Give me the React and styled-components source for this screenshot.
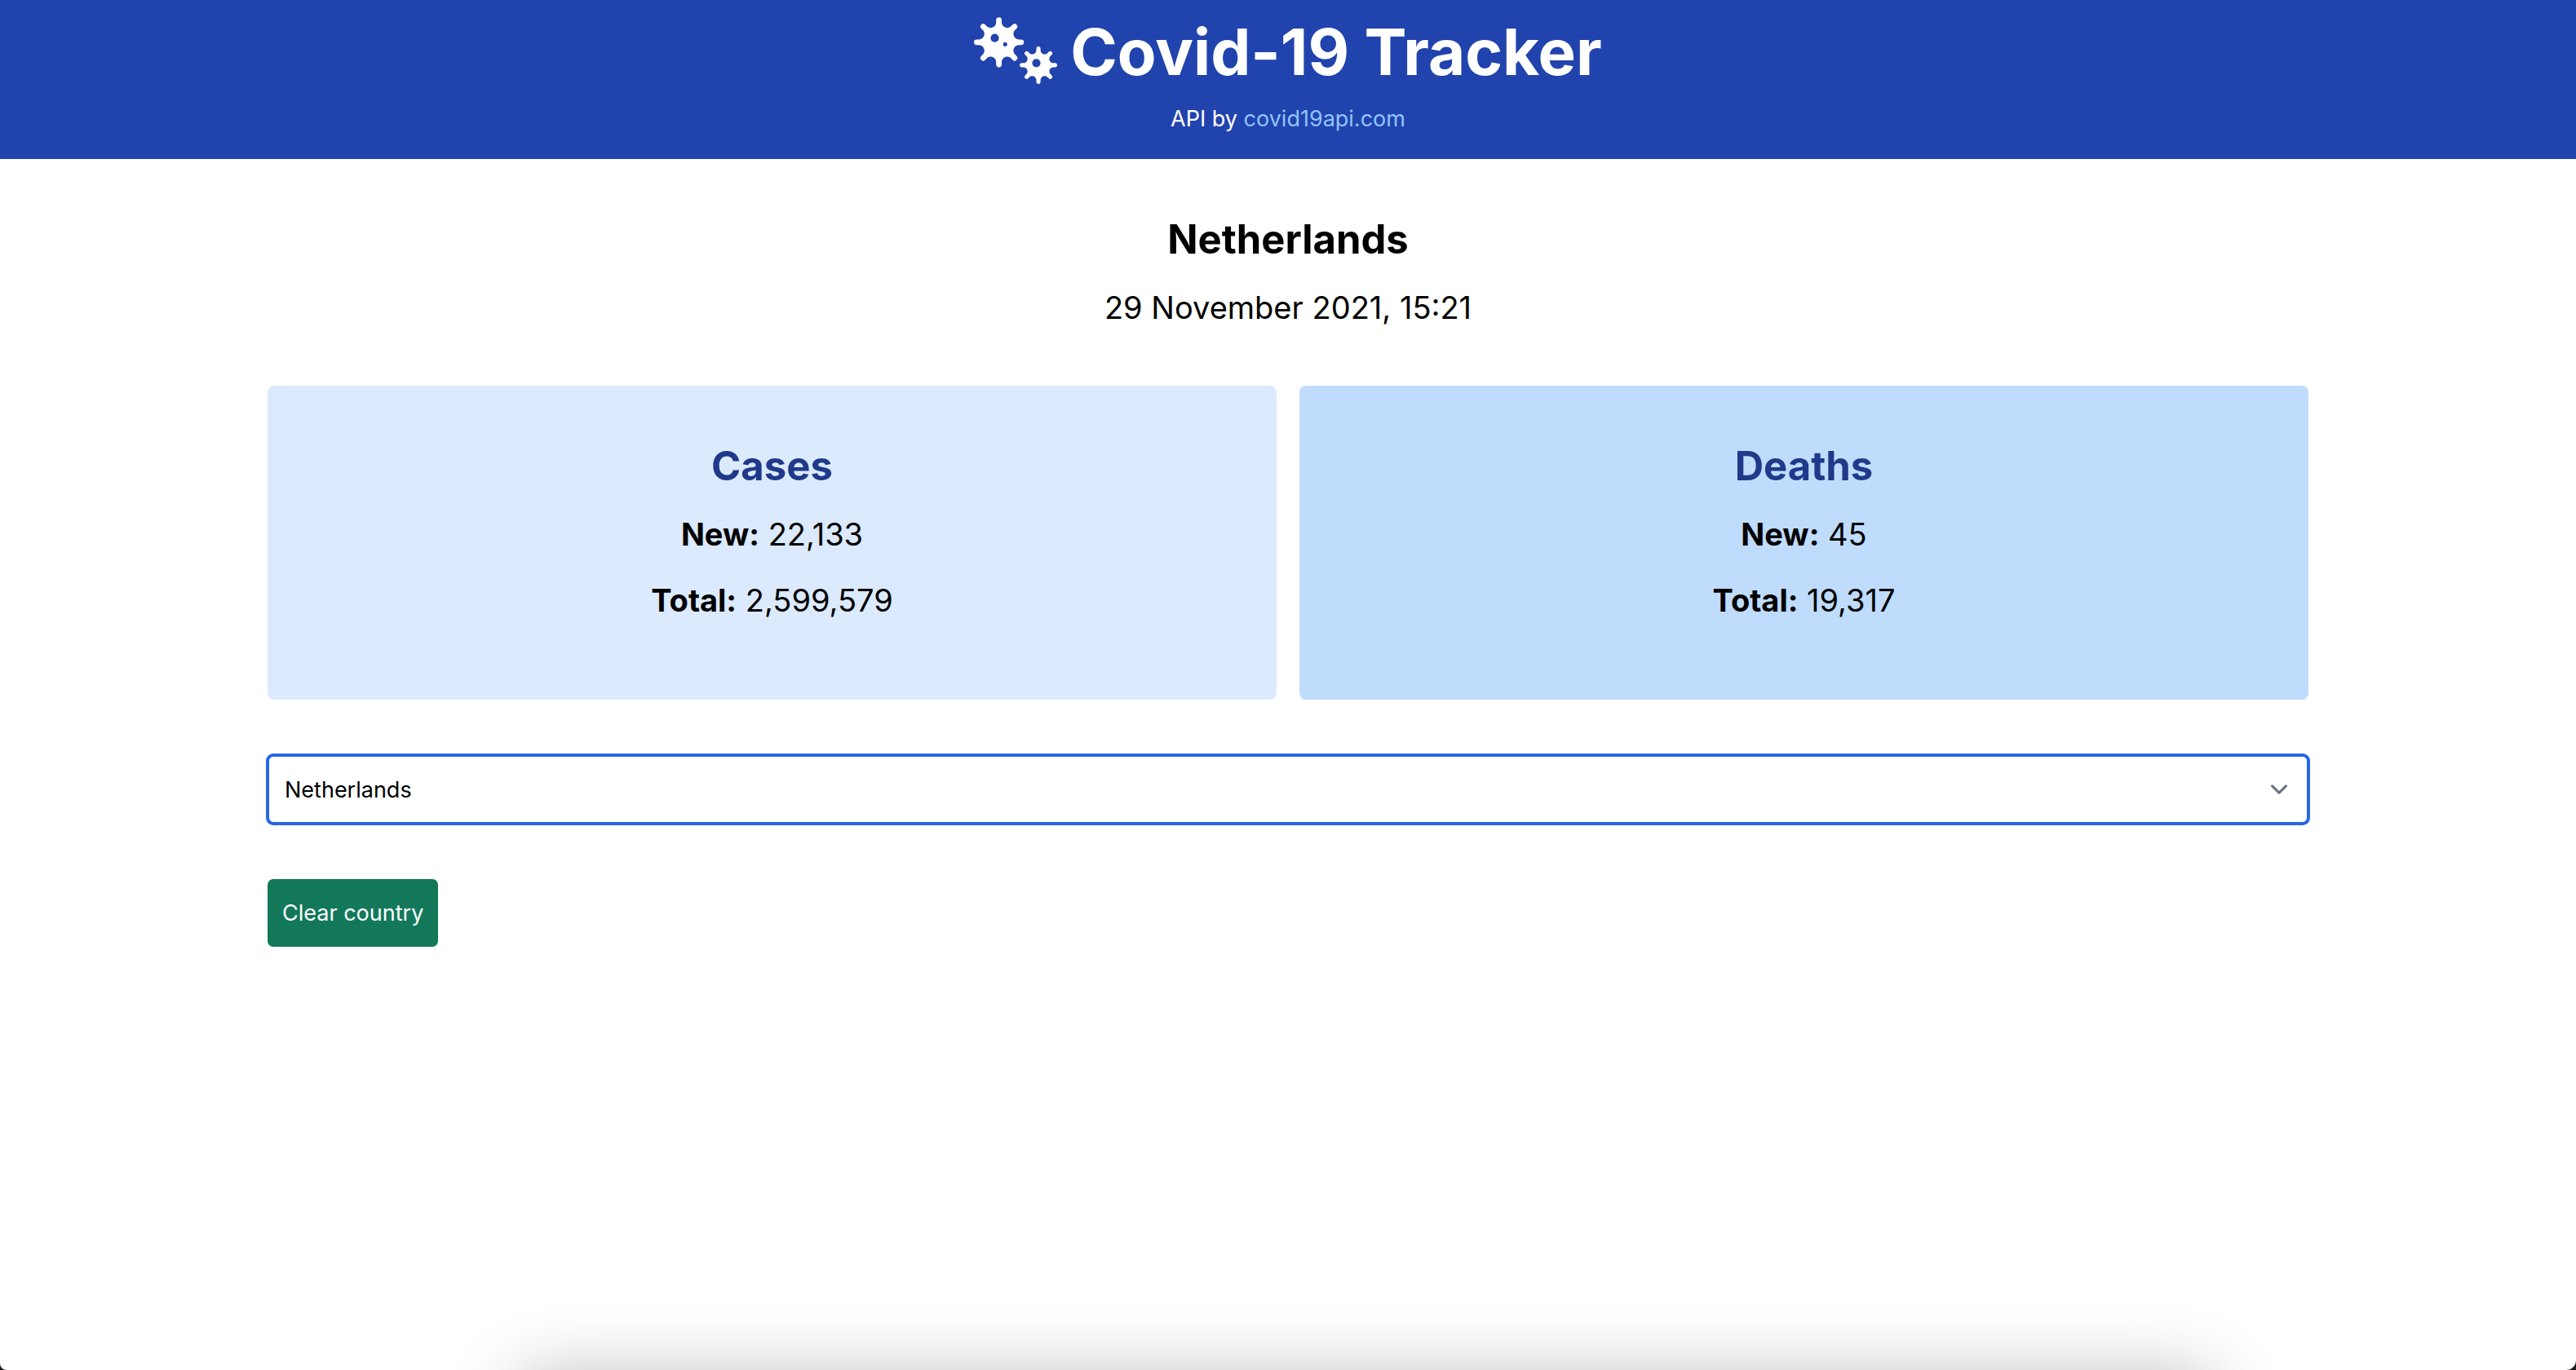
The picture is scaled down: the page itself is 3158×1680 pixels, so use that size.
import { useState } from "react";
import styled, { createGlobalStyle } from "styled-components";
import { FaViruses } from "react-icons/fa";

const GlobalStyle = createGlobalStyle`
  *, *::before, *::after { box-sizing: border-box; }
  body {
    margin: 0;
    background: #1c1c1c;
    color: #000;
    font-family: Inter, "Liberation Sans", sans-serif;
    font-size: 27px;
  }
  h1, h2, h3, p { margin: 0; }
`;

const Page = styled.div`
  position: relative;
  min-height: 100vh;
  overflow: hidden;
  background: #fff;
  border-radius: 0 0 12px 8px;
`;

const Header = styled.header`
  display: flex;
  flex-direction: column;
  align-items: center;
  gap: 12px;
  padding: 16px 28px 27px;
  background: #2143ad;
  color: #fff;
  text-align: center;
`;

const Title = styled.h1`
  display: flex;
  align-items: center;
  gap: 16px;
  font-size: 78px;
  font-weight: 700;
  line-height: 96px;
`;

const VirusIcon = styled(FaViruses)`
  flex: none;
  width: 102px;
  height: 82px;
  margin-bottom: 4px;
`;

const Credit = styled.p`
  line-height: 44px;
`;

const CreditLink = styled.a`
  color: #90c5fd;
  text-decoration: none;
`;

const Main = styled.main`
  display: flex;
  flex-direction: column;
  align-items: stretch;
  gap: 68px;
  max-width: 2558px;
  margin: 0 auto;
  padding: 69px 28px;
`;

const TextStack = styled.div`
  display: flex;
  flex-direction: column;
  gap: 25px;
  text-align: center;
`;

const Heading = styled.h2`
  color: ${(p) => p.$color || "inherit"};
  font-size: 49px;
  font-weight: 700;
  line-height: 60px;
`;

const Line = styled.p`
  font-size: 38px;
  line-height: 56px;
`;

const Cards = styled.section`
  display: grid;
  grid-template-columns: 1fr 1fr;
  gap: 28px;
`;

const Card = styled(TextStack)`
  padding: 69px 28px 94px;
  border-radius: 8px;
  background: ${(p) => p.$background};
`;

const SelectWrap = styled.div`
  display: grid;
  align-items: center;
  > * { grid-area: 1 / 1; }
`;

const CountrySelect = styled.select`
  appearance: none;
  width: 100%;
  height: 84px;
  padding: 0 70px 0 19px;
  border: 2px solid #2766ea;
  border-radius: 7px;
  outline: none;
  box-shadow: 0 0 0 2px #2766ea;
  background: #fff;
  color: #000;
  font: inherit;
`;

const Chevron = styled.svg`
  justify-self: end;
  width: 42px;
  height: 42px;
  margin-right: 15px;
  pointer-events: none;
`;

const ClearButton = styled.button`
  align-self: flex-start;
  padding: 20px 18px;
  border: 0;
  border-radius: 7px;
  background: #13785a;
  color: #fff;
  font: inherit;
  line-height: 43px;
  cursor: pointer;
`;

const DockShadow = styled.div`
  position: absolute;
  top: 100%;
  left: 20%;
  right: 14%;
  height: 160px;
  border-radius: 40px;
  box-shadow: 0 8px 88px rgba(0, 0, 0, 0.28);
  pointer-events: none;
`;

function Statistic({ title, background, fresh, total }) {
  return (
    <Card $background={background}>
      <Heading as="h3" $color="#1f3a8a">{title}</Heading>
      <Line><strong>New:</strong> {fresh}</Line>
      <Line><strong>Total:</strong> {total}</Line>
    </Card>
  );
}

export default function App() {
  const [country, setCountry] = useState("Netherlands");
  return (
    <>
      <GlobalStyle />
      <Page>
        <Header>
          <Title><VirusIcon aria-hidden="true" />Covid-19 Tracker</Title>
          <Credit>API by <CreditLink href="https://covid19api.com">covid19api.com</CreditLink></Credit>
        </Header>
        <Main>
          <TextStack>
            <Heading>Netherlands</Heading>
            <Line>29 November 2021, 15:21</Line>
          </TextStack>
          <Cards>
            <Statistic title="Cases" background="#dbeafe" fresh="22,133" total="2,599,579" />
            <Statistic title="Deaths" background="#bfdcfd" fresh="45" total="19,317" />
          </Cards>
          <SelectWrap>
            <CountrySelect aria-label="Country" value={country} onChange={(e) => setCountry(e.target.value)}>
              <option>Netherlands</option>
            </CountrySelect>
            <Chevron viewBox="0 0 20 20" fill="none" aria-hidden="true">
              <path d="M6 8l4 4 4-4" stroke="#6b7280" strokeWidth="1.5" strokeLinecap="round" strokeLinejoin="round" />
            </Chevron>
          </SelectWrap>
          <ClearButton type="button">Clear country</ClearButton>
        </Main>
        <DockShadow />
      </Page>
    </>
  );
}
